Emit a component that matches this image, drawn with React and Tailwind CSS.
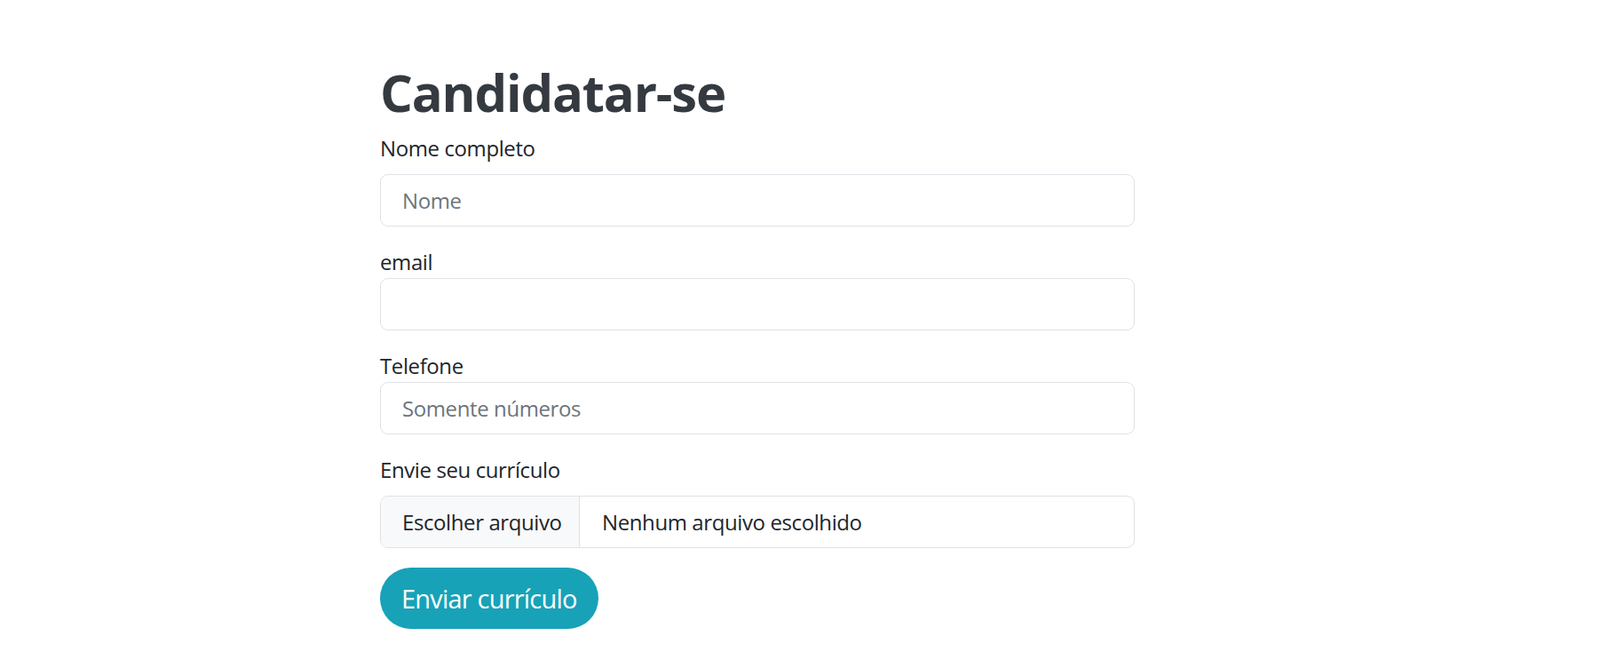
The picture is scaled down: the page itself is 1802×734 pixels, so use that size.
import React from 'react';

const font = { fontFamily: '"Open Sans", "Noto Sans", Arial, sans-serif' };

const Field = ({ label, placeholder, type = 'text', tight }) => (
  <div className="mb-[22px]">
    <label className={`block text-[24px] leading-[36px] tracking-[-0.4px] text-[#212529] ${tight ? '' : 'mb-[11px]'}`}>{label}</label>
    <input
      type={type}
      placeholder={placeholder}
      className="block w-full h-[59px] px-[24px] text-[24px] tracking-[-0.4px] text-[#212529] placeholder:text-[#6c757d] bg-white border border-[#dee2e6] rounded-[9px] outline-none"
    />
  </div>
);

export default function App() {
  return (
    <div className="min-h-screen bg-white pt-[68px] pl-[428px]" style={font}>
      <form className="w-[850px]" onSubmit={(e) => e.preventDefault()}>
        <h1 className="text-[58px] leading-[72px] font-bold tracking-[-1.2px] text-[#343a40] mb-[9px]">Candidatar-se</h1>

        <Field label="Nome completo" placeholder="Nome" />
        <Field label="email" type="email" tight />
        <Field label="Telefone" placeholder="Somente números" tight />

        {/* file upload */}
        <div className="mb-[22px]">
          <label className="block text-[24px] leading-[36px] tracking-[-0.4px] text-[#212529] mb-[11px]">Envie seu currículo</label>
          <div className="flex h-[59px] border border-[#dee2e6] rounded-[9px] overflow-hidden text-[24px] tracking-[-0.4px] text-[#212529]">
            <span className="flex items-center whitespace-nowrap px-[24px] w-[224px] shrink-0 bg-[#f8f9fa] border-r border-[#dee2e6]">Escolher arquivo</span>
            <span className="flex items-center whitespace-nowrap px-[25px]">Nenhum arquivo escolhido</span>
          </div>
        </div>

        <button type="submit" className="h-[69px] px-[24px] rounded-full bg-[#17a2b8] text-white text-[29px] tracking-[-0.8px]">
          Enviar currículo
        </button>
      </form>
    </div>
  );
}
